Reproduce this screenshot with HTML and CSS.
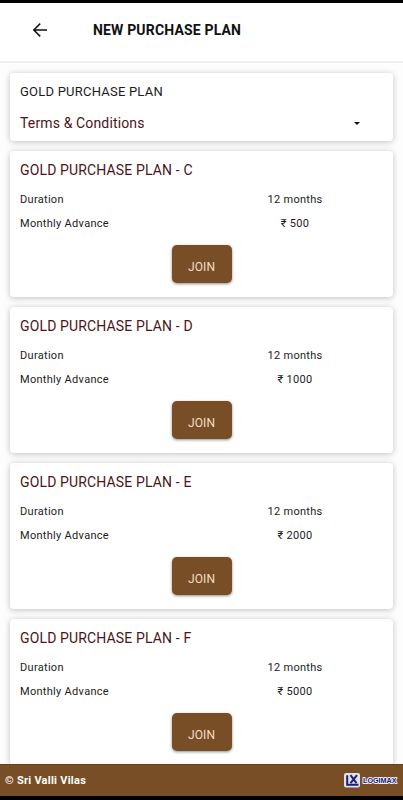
FILE: index.html
```html
<!DOCTYPE html>
<html lang="en">
<head>
<meta charset="utf-8">
<title>New Purchase Plan</title>
<link rel="stylesheet" href="styles.css">
</head>
<body>
<div class="app">
  <header class="header">
    <svg class="back" viewBox="0 0 16 16" width="16" height="16"><path d="M15 8H2M8.2 1.6L1.8 8l6.4 6.4" fill="none" stroke="#111" stroke-width="1.5"/></svg>
    <h1 class="title">NEW PURCHASE PLAN</h1>
  </header>
  <main class="content">
    <section class="card intro">
      <p class="intro-name">GOLD PURCHASE PLAN</p>
      <div class="terms"><span>Terms &amp; Conditions</span><i class="caret"></i></div>
    </section>
    <section class="card plan">
      <h2 class="plan-name">GOLD PURCHASE PLAN - C</h2>
      <div class="row"><span>Duration</span><span class="value">12 months</span></div>
      <div class="row"><span>Monthly Advance</span><span class="value">₹ 500</span></div>
      <button class="join">JOIN</button>
    </section>
    <section class="card plan">
      <h2 class="plan-name">GOLD PURCHASE PLAN - D</h2>
      <div class="row"><span>Duration</span><span class="value">12 months</span></div>
      <div class="row"><span>Monthly Advance</span><span class="value">₹ 1000</span></div>
      <button class="join">JOIN</button>
    </section>
    <section class="card plan">
      <h2 class="plan-name">GOLD PURCHASE PLAN - E</h2>
      <div class="row"><span>Duration</span><span class="value">12 months</span></div>
      <div class="row"><span>Monthly Advance</span><span class="value">₹ 2000</span></div>
      <button class="join">JOIN</button>
    </section>
    <section class="card plan">
      <h2 class="plan-name">GOLD PURCHASE PLAN - F</h2>
      <div class="row"><span>Duration</span><span class="value">12 months</span></div>
      <div class="row"><span>Monthly Advance</span><span class="value">₹ 5000</span></div>
      <button class="join">JOIN</button>
    </section>
  </main>
  <footer class="footer">
    <span class="copyright">© Sri Valli Vilas</span>
    <svg class="logo" viewBox="0 0 54 16" width="54" height="16">
      <rect x="0" y="0" width="16" height="14.5" rx="2" fill="#e4e0ea"/>
      <path d="M3.2 2.2V11.8H14.5" fill="none" stroke="#1b1f76" stroke-width="2"/>
      <path d="M6.5 2.2L12.5 10.2M13 2.2L6.5 10.2" fill="none" stroke="#1b1f76" stroke-width="2"/>
      <text class="logo-text" x="19" y="9.8" textLength="33.5" lengthAdjust="spacingAndGlyphs">LOGIMAX</text>
    </svg>
  </footer>
</div>
</body>
</html>
```
FILE: styles.css
```css
* { box-sizing: border-box; }
body { margin: 0; font-family: Roboto, "Noto Sans", sans-serif; color: #1c1c1c; }
h1, h2, p { margin: 0; font-weight: 400; }
.app { height: 800px; display: flex; flex-direction: column; overflow: hidden; background: #fdfdfd; border-top: 3px solid #000; border-bottom: 4px solid #000; }
.header { flex: none; height: 60px; display: flex; align-items: center; padding: 0 0 4px 32px; background: #fff; border-bottom: 2px solid #eee; }
.back { flex: none; }
.title { margin-left: 45px; font-size: 14px; line-height: 20px; font-weight: 700; letter-spacing: .17px; color: #111; }
.content { flex: 1; min-height: 0; overflow: hidden; padding: 10px 10px 0; display: flex; flex-direction: column; gap: 10px; }
.card { flex: none; padding: 0 10px; background: #fff; border-radius: 4px; box-shadow: 0 1px 6px rgba(0, 0, 0, .25); }
.intro { height: 68px; padding-top: 9px; }
.intro-name { font-size: 13px; line-height: 20px; letter-spacing: .22px; }
.terms { display: flex; align-items: center; justify-content: space-between; margin-top: 11px; padding-right: 23px; font-size: 14px; line-height: 20px; letter-spacing: .14px; color: #4b1519; }
.caret { border: 3px solid transparent; border-top-color: #111; border-bottom: 0; }
.plan { height: 146px; padding-top: 9px; display: flex; flex-direction: column; }
.plan-name { margin-bottom: 8px; font-size: 14px; line-height: 20px; letter-spacing: .14px; color: #4b1519; }
.row { display: grid; grid-template-columns: 1fr 176px; font-size: 11px; line-height: 24px; letter-spacing: .3px; }
.value { text-align: center; }
.join { align-self: center; width: 60px; height: 38px; margin-top: 9px; padding: 5px 0 0; border: 0; border-radius: 5px; background: #774e25; box-shadow: 0 1px 3px rgba(0, 0, 0, .45); color: #f3dfc8; font: 400 12px/20px Roboto, sans-serif; letter-spacing: .1px; }
.footer { flex: none; height: 32px; display: flex; align-items: center; justify-content: space-between; padding: 0 5px; background: #774e25; border-top: 1px solid #654019; color: #fff; }
.copyright { font-size: 11px; font-weight: 700; letter-spacing: .26px; }
.logo-text { font: 700 7px "Liberation Sans", sans-serif; fill: #20247c; stroke: #eeeaf4; stroke-width: 2px; stroke-linejoin: round; paint-order: stroke; }
```
